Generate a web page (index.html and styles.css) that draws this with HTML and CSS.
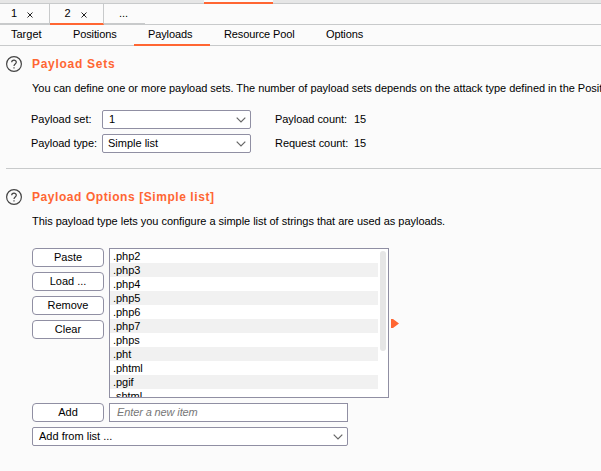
FILE: index.html
```html
<!DOCTYPE html>
<html lang="en">
<head>
<meta charset="utf-8">
<title>Payloads</title>
<link rel="stylesheet" href="styles.css">
</head>
<body>
<div class="topbar"><div class="topbar-active"></div></div>
<nav class="attacks">
  <div class="attack first"><span>1</span><svg class="close" viewBox="0 0 6 6"><path d="M.5 .5l5 5M5.500 .5l-5 5"/></svg></div>
  <div class="attack active"><span>2</span><svg class="close" viewBox="0 0 6 6"><path d="M.5 .5l5 5M5.500 .5l-5 5"/></svg></div>
  <div class="attack more"><span>...</span></div>
</nav>
<nav class="tabs">
  <div class="tab target"><span>Target</span></div>
  <div class="tab positions"><span>Positions</span></div>
  <div class="tab payloads active"><span>Payloads</span></div>
  <div class="tab pool"><span>Resource Pool</span></div>
  <div class="tab options"><span>Options</span></div>
</nav>
<section class="sets">
  <header class="heading">
    <svg class="help" viewBox="0 0 16 16"><circle cx="8" cy="8" r="7.400"/><path d="M5.700 6.300C5.700 3.500 10.300 3.500 10.300 6.200C10.300 7.900 8 8 8 10M8 11.200V12.500"/></svg>
    <h2 class="h-sets">Payload Sets</h2>
  </header>
  <p class="intro">You can define one or more payload sets. The number of payload sets depends on the attack type defined in the Posit</p>
  <div class="fields">
    <label class="l-set">Payload set:</label>
    <div class="select"><span class="one">1</span><svg class="chevron" viewBox="0 0 10 6"><path d="M.7 .7L5 5L9.300 .7"/></svg></div>
    <span class="count">Payload count:</span><span class="num">15</span>
    <label class="l-type">Payload type:</label>
    <div class="select"><span>Simple list</span><svg class="chevron" viewBox="0 0 10 6"><path d="M.7 .7L5 5L9.300 .7"/></svg></div>
    <span class="count">Request count:</span><span class="num">15</span>
  </div>
</section>
<section class="opts">
  <header class="heading">
    <svg class="help" viewBox="0 0 16 16"><circle cx="8" cy="8" r="7.400"/><path d="M5.700 6.300C5.700 3.500 10.300 3.500 10.300 6.200C10.300 7.900 8 8 8 10M8 11.200V12.500"/></svg>
    <h2>Payload Options [Simple list]</h2>
  </header>
  <p class="intro">This payload type lets you configure a simple list of strings that are used as payloads.</p>
  <div class="editor">
    <div class="buttons">
      <div class="button">Paste</div>
      <div class="button">Load ...</div>
      <div class="button">Remove</div>
      <div class="button">Clear</div>
    </div>
    <div class="list">
      <ul>
        <li>.php2</li><li>.php3</li><li>.php4</li><li>.php5</li><li>.php6</li><li>.php7</li><li>.phps</li><li>.pht</li><li>.phtml</li><li>.pgif</li><li>.shtml</li>
      </ul>
      <div class="thumb"></div>
    </div>
    <svg class="arrow" viewBox="0 0 8 9"><path d="M0 0H2L8 4.500L2 9H0Z"/></svg>
  </div>
  <div class="adder">
    <div class="button">Add</div>
    <div class="input">Enter a new item</div>
  </div>
  <div class="select wide"><span>Add from list ...</span><svg class="chevron" viewBox="0 0 10 6"><path d="M.7 .7L5 5L9.300 .7"/></svg></div>
</section>
</body>
</html>
```

FILE: styles.css
```css
* { box-sizing: border-box; }
body {
  margin: 0;
  height: 471px;
  overflow: hidden;
  background: #fbfbfb;
  color: #000;
  font: 11px/13px "Liberation Sans", Arial, sans-serif;
  white-space: nowrap;
}
h2, p, ul { margin: 0; padding: 0; list-style: none; font-size: inherit; }
.topbar { height: 4px; padding-left: 204px; background: #e6e6e6; border-bottom: 1px solid #c8cacb; }
.topbar-active { width: 69px; height: 4px; background: #fbfbfb; border-bottom: 2px solid #ff6633; }
.attacks { display: flex; height: 21px; border-bottom: 1px solid #c8cacb; }
.attack { display: flex; height: 21px; border-bottom: 2px solid #c8cacb; padding-top: 3px; }
.first { width: 50px; padding-left: 11px; border-right: 1px solid #c8cacb; }
.attack.active { width: 54px; padding-left: 14.5px; border-right: 1px solid #c8cacb; border-bottom-color: #ff6633; }
.more { width: 41px; padding-left: 15px; }
.close { width: 6px; height: 6px; margin: 5px 0 0 10px; fill: none; stroke: #222; stroke-width: 1; }
.tabs { display: flex; height: 21px; border-bottom: 1px solid #c8cacb; letter-spacing: -.12px; }
.tab { height: 21px; padding-top: 3px; }
.target { width: 62px; padding-left: 11px; letter-spacing: 0; }
.positions { width: 72px; padding-left: 11px; }
.payloads { width: 76px; padding-left: 14px; }
.tab.active { border-bottom: 2px solid #ff6633; }
.pool { width: 103px; padding-left: 14px; }
.options { padding-left: 13px; }
.sets { height: 123px; margin-left: 6px; padding-top: 10px; border-bottom: 1px solid #c8cacb; }
.heading { display: flex; height: 16px; }
.help { width: 16px; height: 16px; margin-right: 10px; fill: none; stroke: #444; stroke-width: 1.2; }
.heading h2 { color: #ff6633; font-size: 12px; line-height: 16px; letter-spacing: .57px; font-weight: bold; }
.heading .h-sets { letter-spacing: .72px; }
.intro { margin: 10px 0 0 26px; letter-spacing: -.03px; overflow: hidden; }
.fields {
  display: grid;
  grid-template-columns: 71px 149px 79px auto;
  grid-auto-rows: 19px;
  row-gap: 5px;
  margin: 15px 0 0 25px;
  line-height: 19px;
}
.l-type, .count { letter-spacing: -.05px; }
.count { padding-left: 24px; width: 103px; }
.num { padding-left: 24px; }
.select, .button, .input { height: 19px; border: 1px solid #908fa3; background: #fff; line-height: 17px; }
.select { display: flex; justify-content: space-between; border-radius: 2px; padding: 0 4px 0 5px; }
.one { padding-left: 1px; }
.chevron { width: 10px; height: 6px; margin-top: 6px; fill: none; stroke: #666; stroke-width: 1.2; }
.opts { padding: 20px 0 0 6px; }
.editor { display: flex; margin: 20px 0 0 26px; }
.buttons { display: flex; flex-direction: column; gap: 5px; margin-right: 5px; }
.button { width: 72px; border-radius: 4px; text-align: center; }
.list { display: flex; width: 280px; height: 150px; border: 1px solid #908fa3; background: #fff; overflow: hidden; }
.list ul { width: 268px; }
.list li { height: 14px; line-height: 14px; padding-left: 3px; letter-spacing: -.05px; }
.list li:nth-child(even) { background: #f1f1f1; }
.thumb { width: 6px; height: 100px; margin: 2px 0 0 2px; border-radius: 3px; background: #e6e6e6; }
.arrow { width: 8px; height: 9px; margin: 71px 0 0 2px; fill: #ff6633; }
.adder { display: flex; gap: 5px; margin: 5px 0 5px 26px; }
.input { width: 239px; padding-left: 7px; color: #777; font-style: italic; letter-spacing: -.12px; }
.wide { width: 316px; margin-left: 26px; padding-left: 6px; }
```
